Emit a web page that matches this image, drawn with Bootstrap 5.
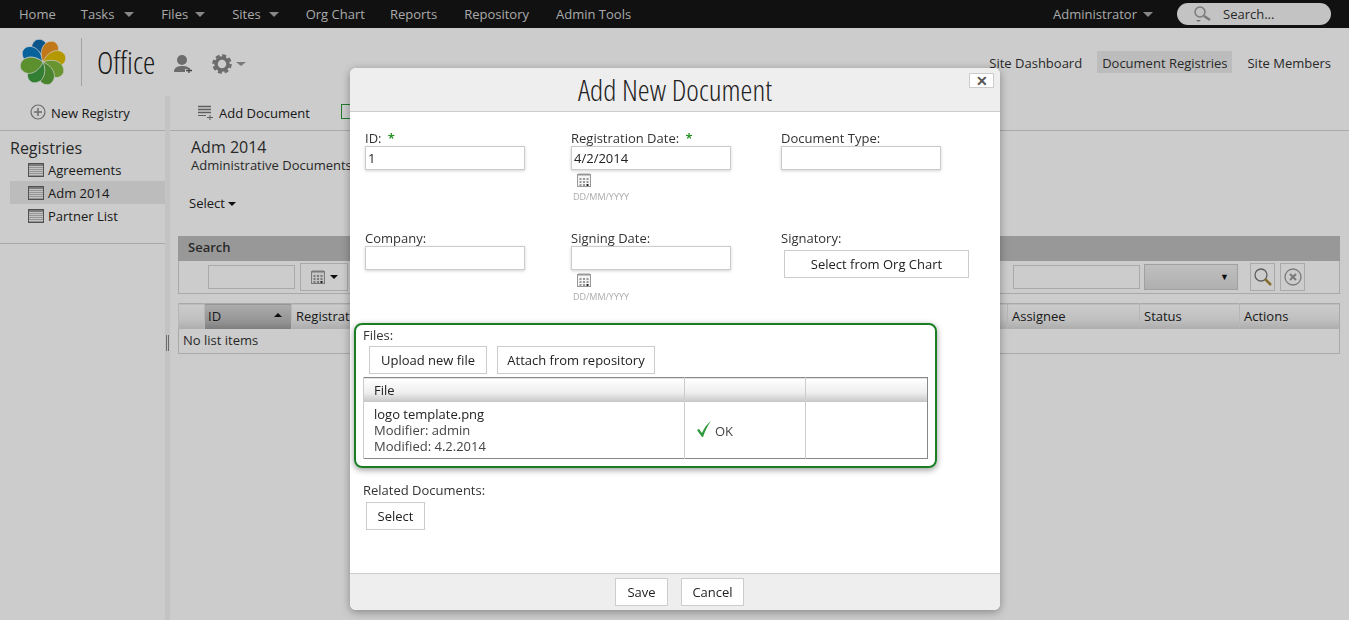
<!DOCTYPE html>
<html lang="en">
  <head>
    <meta charset="UTF-8" />
    <title>Add New Document</title>
    <link rel="stylesheet" href="https://cdn.jsdelivr.net/npm/bootstrap@5.3.2/dist/css/bootstrap.min.css" />
    <style>
      html, body { height: 620px; overflow: hidden; }
      body { font-family: "Open Sans", "Noto Sans", sans-serif; font-size: 13px; line-height: 18px; color: #333; background: #fff; }
      .top-bar { height: 28px; background: #161616; padding: 0 18px 0 19px; }
      .top-link { color: #d4d4d4; text-decoration: none; margin-right: 27px; }
      .top-link:first-child { margin-right: 25px; }
      .top-link.org-link { margin-right: 25px; }
      .top-link.has-menu { margin-right: 7px; }
      .top-link.tasks-link { margin-right: 10px; }
      .top-link.sites-link { margin-right: 8px; }
      .top-caret { width: 0; height: 0; border: 5px solid transparent; border-top-color: #aaa; border-bottom: 0; margin-right: 27px; margin-top: 1px; }
      .top-user { color: #d4d4d4; margin-right: 6px; }
      .top-search { width: 154px; height: 22px; border-radius: 11px; background: #f4f4f4; margin-left: -3px; padding-left: 16px; gap: 10px; color: #333; }
      .site-head { height: 68px; padding: 0 13px 0 19px; }
      .logo-rule { width: 1px; height: 48px; background: #ccc; margin: 0 15px 0 14px; }
      .site-name { font-size: 31px; font-weight: 300; color: #222; font-stretch: 75%; line-height: 40px; width: 60px; }
      .head-icons { margin-left: 16px; margin-top: 4px; gap: 19px; }
      .site-link { color: #333; text-decoration: none; padding: 3px 5px 0; margin-left: 10px; height: 22px; }
      .site-link.current { background: #ececec; }
      .work-area { height: 524px; }
      .side-col { flex: 0 0 165px; }
      .splitter { flex: 0 0 5px; background: #f4f4f4; }
      .grip { width: 3px; height: 16px; border: solid #888; border-width: 0 1px; margin: 239px 0 0 1px; }
      .tool-row { height: 35px; border-bottom: 1px solid #d4d4d4; padding-top: 8px; }
      .tool-item { color: #222; }
      .new-tools { padding-left: 30px; gap: 5px; }
      .side-title { font-size: 16px; margin: 7px 0 0 10px; line-height: 20px; color: #333; }
      .reg-item { height: 23px; margin-left: 10px; padding-left: 18px; color: #222; }
      .reg-item.current { background: #ececec; }
      .side-end { height: 17px; border-bottom: 1px solid #d4d4d4; }
      .main-col { min-width: 0; flex: 1 1 0; }
      .add-tools { padding-left: 28px; gap: 5px; }
      .green-ico { margin-left: 26px; }
      .reg-head { padding: 6px 0 0 21px; height: 63px; }
      .reg-title { font-size: 16px; line-height: 20px; }
      .reg-sub { line-height: 16px; }
      .select-row { padding-left: 19px; height: 42px; color: #222; }
      .down-caret { display: inline-block; width: 0; height: 0; border: 4px solid transparent; border-top-color: #111; border-bottom: 0; vertical-align: 2px; margin-left: 3px; }
      .search-wrap { margin: 0 9px 0 8px; }
      .search-bar { height: 25px; background: #bfbfbf; padding: 2px 0 0 10px; font-weight: 600; color: #333; }
      .search-row { height: 33px; border: 1px solid #d4d4d4; border-top: 0; padding-left: 29px; padding-right: 34px; }
      .fake-input { width: 87px; height: 24px; border: 1px solid #d4d4d4; }
      .filter-right { width: 127px; }
      .cal-btn { width: 48px; height: 28px; border: 1px solid #d4d4d4; margin-left: 5px; }
      .fake-select { width: 94px; height: 26px; border: 1px solid #c8c8c8; background: linear-gradient(#f0f0f0, #dcdcdc); margin-left: 4px; padding-right: 8px; font-size: 9px; color: #111; }
      .icon-btn { width: 25px; height: 28px; border: 1px solid #d4d4d4; margin-left: 12px; }
      .icon-btn + .icon-btn { margin-left: 5px; }
      .list-table { margin: 9px 0 0; border: 1px solid #d4d4d4; table-layout: fixed; width: 100%; }
      .list-table th { height: 25px; padding: 0 4px; vertical-align: middle; font-weight: 400; color: #222; background: linear-gradient(#fff, #f0f0f0 60%, #d8d8d8); border: 0; border-left: 1px solid #e4e4e4; }
      .list-table th.sorted { background: linear-gradient(#d8d8d8, #b8b8b8 70%, #9c9c9c); padding-left: 3px; }
      .list-table td { height: 24px; padding: 2px 4px 4px; border: 0; color: #333; --bs-table-bg: transparent; background: transparent; }
      .sort-up { float: right; width: 0; height: 0; border: 4px solid transparent; border-bottom-color: #111; border-top: 0; margin: 6px 5px 0 0; }
      .modal-backdrop.page-shade { opacity: .2; }
      .doc-dialog { position: absolute; left: 350px; top: 68px; width: 650px; height: 542px; z-index: 1060; }
      .doc-dialog .modal-content { height: 100%; background: #fff; border: 0; border-radius: 6px; box-shadow: 0 2px 8px rgba(0,0,0,.35); overflow: hidden; }
      .doc-head { height: 44px; background: #eee; border-bottom: 1px solid #ccc; position: relative; }
      .doc-title { font-size: 30px; font-weight: 300; font-stretch: 75%; line-height: 44px; color: #222; width: 100%; text-align: center; margin: 0; }
      .doc-close { position: absolute; right: 6px; top: 5px; width: 25px; height: 15px; background: #fff; border: 1px solid #ccc; color: #555; font-weight: 700; line-height: 12px; font-size: 14px; text-align: center; padding: 0; }
      .doc-body { padding: 18px 0 0 15px; height: 461px; }
      .field-row { height: 100px; }
      .field-row.last-row { height: 93px; }
      .field-one { width: 206px; }
      .field-two { width: 210px; }
      .field-label { height: 16px; line-height: 17px; color: #333; }
      .req-mark { color: #1a8a1a; margin-left: 3px; font-weight: 600; }
      .doc-input { width: 160px; height: 24px; border: 1px solid #ccc; box-shadow: 0 1px 3px rgba(0,0,0,.18); background: #fff; padding: 1px 2px; line-height: 20px; color: #222; display: block; font-size: 13px; }
      .cal-icon { display: block; margin: 2px 0 0 5px; }
      .date-hint { font-size: 9px; line-height: 12px; color: #aaa; margin: 3px 0 0 2px; }
      .plain-btn { background: #fff; border: 1px solid #ccc; border-radius: 0; color: #222; font-size: 13px; line-height: 18px; padding: 4px 0; height: 28px; text-align: center; }
      .org-btn { width: 185px; margin: 4px 0 0 3px; display: block; }
      .upload-btn { width: 118px; }
      .attach-btn { width: 158px; }
      .select-btn { width: 59px; margin: 4px 0 0 3px; }
      .save-btn { width: 53px; }
      .cancel-btn { width: 63px; }
      .files-box { width: 583px; height: 145px; margin: 0 0 0 -11px; border: 2px solid #1a7f24; border-radius: 8px; box-shadow: 0 2px 6px rgba(0,0,0,.4); padding: 2px 7px; }
      .files-btns { margin: 3px 0 3px 6px; gap: 10px; }
      .files-table { width: 565px; margin: 0; border: 1px solid #888; table-layout: fixed; }
      .files-table th { height: 24px; padding: 0 10px; vertical-align: middle; font-weight: 400; color: #222; background: linear-gradient(#fff, #eee 60%, #c4c4c4); border: 0; border-left: 1px solid #ccc; }
      .files-table td { padding: 4px 10px 2px; height: 57px; border: 0; border-left: 1px solid #ccc; line-height: 16px; color: #444; vertical-align: top; }
      .file-name { color: #222; }
      .ok-cell { padding-top: 18px !important; padding-left: 12px !important; gap: 3px; }
      .ok-text { display: inline-block; margin-top: 3px; }
      .related { margin: 14px 0 0 -2px; }
      .doc-foot { height: 37px; background: #eee; border-top: 1px solid #ccc; gap: 13px; padding-left: 9px; }
    </style>
  </head>
  <body>
    <svg width="0" height="0" class="d-block">
      <symbol id="cal" viewBox="0 0 16 16">
        <rect x="1.5" y="2.5" width="13" height="12" fill="#f4f4f4" stroke="#999" />
        <path d="M3 1v3M5 1v3M7 1v3M9 1v3M11 1v3M13 1v3" stroke="#999" />
        <path d="M3.5 6h2v2h-2zM7 6h2v2H7zM10.500 6h2v2h-2zM3.500 9h2v2h-2zM7 9h2v2H7zM10.500 9h2v2h-2zM3.500 12h2v2h-2zM7 12h2v2H7z" fill="#999" />
        <path d="M10.500 12h2v2h-2z" fill="#222" />
      </symbol>
      <symbol id="list-ico" viewBox="0 0 16 14">
        <rect x=".5" y=".5" width="15" height="13" fill="#f4f4f4" stroke="#666" />
        <path d="M1 1h14v2H1z" fill="#999" />
        <path d="M1 4.500h14M1 6.500h14M1 8.500h14M1 10.500h14M1 12.500h14" stroke="#bbb" />
      </symbol>
    </svg>

    <div class="top-bar d-flex align-items-center">
      <a class="top-link" href="#">Home</a>
      <a class="top-link has-menu tasks-link" href="#">Tasks</a><span class="top-caret"></span>
      <a class="top-link has-menu" href="#">Files</a><span class="top-caret"></span>
      <a class="top-link has-menu sites-link" href="#">Sites</a><span class="top-caret"></span>
      <a class="top-link org-link" href="#">Org Chart</a>
      <a class="top-link" href="#">Reports</a>
      <a class="top-link" href="#">Repository</a>
      <a class="top-link" href="#">Admin Tools</a>
      <span class="top-user ms-auto">Administrator</span><span class="top-caret"></span>
      <div class="top-search d-flex align-items-center">
        <svg width="20" height="18" viewBox="0 0 20 18" fill="none" stroke="#999" stroke-width="1.500"><circle cx="7" cy="7" r="5" /><path d="M11 11l6 4" stroke-width="2.500" /><path d="M3 15h5l-2.500 2z" fill="#888" stroke="none" /></svg>
        <span>Search...</span>
      </div>
    </div>

    <div class="site-head d-flex align-items-center">
      <svg width="48" height="48" viewBox="-23 -23 46 46">
        <g stroke="#fff" stroke-width=".7">
          <path d="M0 0C-10-4-15-15-7-21C2-25 10-12 0 0" fill="#0f6cb0" />
          <path d="M0 0C-10-4-15-15-7-21C2-25 10-12 0 0" transform="rotate(-45)" fill="#0b7cc4" />
          <path d="M0 0C-10-4-15-15-7-21C2-25 10-12 0 0" transform="rotate(-90)" fill="#0a66a8" />
          <path d="M0 0C-10-4-15-15-7-21C2-25 10-12 0 0" transform="rotate(45)" fill="#f0961e" />
          <path d="M0 0C-10-4-15-15-7-21C2-25 10-12 0 0" transform="rotate(90)" fill="#e0be00" />
          <path d="M0 0C-10-4-15-15-7-21C2-25 10-12 0 0" transform="rotate(135)" fill="#82bb3c" />
          <path d="M0 0C-10-4-15-15-7-21C2-25 10-12 0 0" transform="rotate(180)" fill="#5da63a" />
          <path d="M0 0C-10-4-15-15-7-21C2-25 10-12 0 0" transform="rotate(225)" fill="#3f9e3f" />
          <path d="M0 0C-10-4-15-15-7-21C2-25 10-12 0 0" transform="rotate(270)" fill="#74b53a" />
        </g>
      </svg>
      <span class="logo-rule"></span>
      <span class="site-name">Office</span>
      <span class="head-icons d-flex align-items-center">
        <svg width="20" height="20" viewBox="0 0 20 20" fill="#888"><circle cx="9" cy="6" r="5" /><path d="M1 18c0-4 3-6 8-6s7 1 7 3H12v3z" /><path d="M13 16.500h6M16 14v5" stroke="#555" stroke-width="1.300" /></svg>
        <svg width="36" height="20" viewBox="0 0 36 20" fill="none"><circle cx="10" cy="10" r="6" stroke="#888" stroke-width="3.500" /><circle cx="10" cy="10" r="8.500" stroke="#888" stroke-width="2.500" stroke-dasharray="4 2.670" /><path d="M24 8h10l-5 4z" fill="#999" /></svg>
      </span>
      <nav class="ms-auto d-flex">
        <a class="site-link" href="#">Site Dashboard</a>
        <a class="site-link current" href="#">Document Registries</a>
        <a class="site-link" href="#">Site Members</a>
      </nav>
    </div>

    <div class="work-area d-flex">
      <aside class="side-col">
        <div class="tool-row new-tools d-flex tool-item">
          <svg width="16" height="16" viewBox="0 0 16 16" fill="none" stroke="#888" stroke-width="1.200"><circle cx="8" cy="8" r="7" /><path d="M8 4v8M4 8h8" stroke-width="1.500" /></svg>
          <span>New Registry</span>
        </div>
        <div class="side-title">Registries</div>
        <div class="reg-item d-flex align-items-center gap-1"><svg width="16" height="14"><use href="#list-ico" /></svg>Agreements</div>
        <div class="reg-item current d-flex align-items-center gap-1"><svg width="16" height="14"><use href="#list-ico" /></svg>Adm 2014</div>
        <div class="reg-item d-flex align-items-center gap-1"><svg width="16" height="14"><use href="#list-ico" /></svg>Partner List</div>
        <div class="side-end"></div>
      </aside>
      <div class="splitter"><div class="grip"></div></div>
      <main class="main-col">
        <div class="tool-row add-tools d-flex tool-item">
          <svg width="16" height="16" viewBox="0 0 16 16" fill="none" stroke="#777"><path d="M0 2.500h13M0 5.500h13M0 8.500h13" stroke-width="1.500" /><path d="M0 11.500h8M9 13.500h6M12 11v5" /></svg>
          <span>Add Document</span>
          <svg class="green-ico" width="13" height="15" viewBox="0 0 13 15" fill="none" stroke="#2a9a3a"><rect x=".5" y=".5" width="12" height="14" /></svg>
        </div>
        <div class="reg-head">
          <div class="reg-title">Adm 2014</div>
          <div class="reg-sub">Administrative Documents</div>
        </div>
        <div class="select-row">Select<span class="down-caret"></span></div>
        <div class="search-wrap">
          <div class="search-bar">Search</div>
          <div class="search-row d-flex align-items-center">
            <div class="fake-input"></div>
            <div class="cal-btn d-flex align-items-center justify-content-center gap-1"><svg width="16" height="16"><use href="#cal" /></svg><span class="down-caret m-0"></span></div>
            <div class="fake-input filter-right ms-auto"></div>
            <div class="fake-select d-flex align-items-center justify-content-end">&#9660;</div>
            <div class="icon-btn d-flex align-items-center justify-content-center">
              <svg width="20" height="20" viewBox="0 0 20 20" fill="none"><circle cx="8" cy="8" r="6" stroke="#777" stroke-width="1.300" /><path d="M12 12l6 6" stroke="#a88a3c" stroke-width="2.500" /></svg>
            </div>
            <div class="icon-btn d-flex align-items-center justify-content-center">
              <svg width="18" height="18" viewBox="0 0 18 18" fill="none" stroke="#999" stroke-width="1.300"><circle cx="9" cy="9" r="8" /><path d="M6 6l6 6M12 6l-6 6" stroke-width="2" /></svg>
            </div>
          </div>
          <table class="table list-table">
            <colgroup><col style="width:26px" /><col style="width:87px" /><col /><col style="width:132px" /><col style="width:100px" /><col style="width:100px" /></colgroup>
            <thead>
              <tr><th></th><th class="sorted">ID<span class="sort-up"></span></th><th>Registration Date</th><th>Assignee</th><th>Status</th><th>Actions</th></tr>
            </thead>
            <tbody>
              <tr><td colspan="6">No list items</td></tr>
            </tbody>
          </table>
        </div>
      </main>
    </div>

    <div class="modal-backdrop page-shade"></div>

    <div class="doc-dialog">
      <div class="modal-content">
        <div class="doc-head">
          <h5 class="doc-title">Add New Document</h5>
          <button class="doc-close" type="button">&#10005;</button>
        </div>
        <div class="doc-body">
          <div class="field-row d-flex">
            <div class="field-one"><div class="field-label">ID: <span class="req-mark">*</span></div><input class="doc-input" value="1" /></div>
            <div class="field-two">
              <div class="field-label">Registration Date: <span class="req-mark">*</span></div>
              <input class="doc-input" value="4/2/2014" />
              <svg class="cal-icon" width="16" height="16"><use href="#cal" /></svg>
              <div class="date-hint">DD/MM/YYYY</div>
            </div>
            <div><div class="field-label">Document Type:</div><input class="doc-input" /></div>
          </div>
          <div class="field-row last-row d-flex">
            <div class="field-one"><div class="field-label">Company:</div><input class="doc-input" /></div>
            <div class="field-two">
              <div class="field-label">Signing Date:</div>
              <input class="doc-input" />
              <svg class="cal-icon" width="16" height="16"><use href="#cal" /></svg>
              <div class="date-hint">DD/MM/YYYY</div>
            </div>
            <div><div class="field-label">Signatory:</div><button class="plain-btn org-btn" type="button">Select from Org Chart</button></div>
          </div>
          <div class="files-box">
            <div class="field-label">Files:</div>
            <div class="files-btns d-flex">
              <button class="plain-btn upload-btn" type="button">Upload new file</button>
              <button class="plain-btn attach-btn" type="button">Attach from repository</button>
            </div>
            <table class="table files-table">
              <colgroup><col style="width:321px" /><col style="width:121px" /><col /></colgroup>
              <thead><tr><th>File</th><th></th><th></th></tr></thead>
              <tbody>
                <tr>
                  <td><div class="file-name">logo template.png</div>Modifier: admin<br />Modified: 4.2.2014</td>
                  <td class="ok-cell">
                    <div class="d-flex gap-1 align-items-start">
                      <svg width="14" height="18" viewBox="0 0 14 18"><path d="M0 10l2-1 3 4c2-5 5-9 9-12-3 4-6 10-8 16h-1z" fill="#2f9a3c" /></svg>
                      <span class="ok-text">OK</span>
                    </div>
                  </td>
                  <td></td>
                </tr>
              </tbody>
            </table>
          </div>
          <div class="related">
            <div class="field-label">Related Documents:</div>
            <button class="plain-btn select-btn" type="button">Select</button>
          </div>
        </div>
        <div class="doc-foot d-flex justify-content-center align-items-center">
          <button class="plain-btn save-btn" type="button">Save</button>
          <button class="plain-btn cancel-btn" type="button">Cancel</button>
        </div>
      </div>
    </div>

    <script src="https://cdn.jsdelivr.net/npm/bootstrap@5.3.2/dist/js/bootstrap.bundle.min.js"></script>
  </body>
</html>
